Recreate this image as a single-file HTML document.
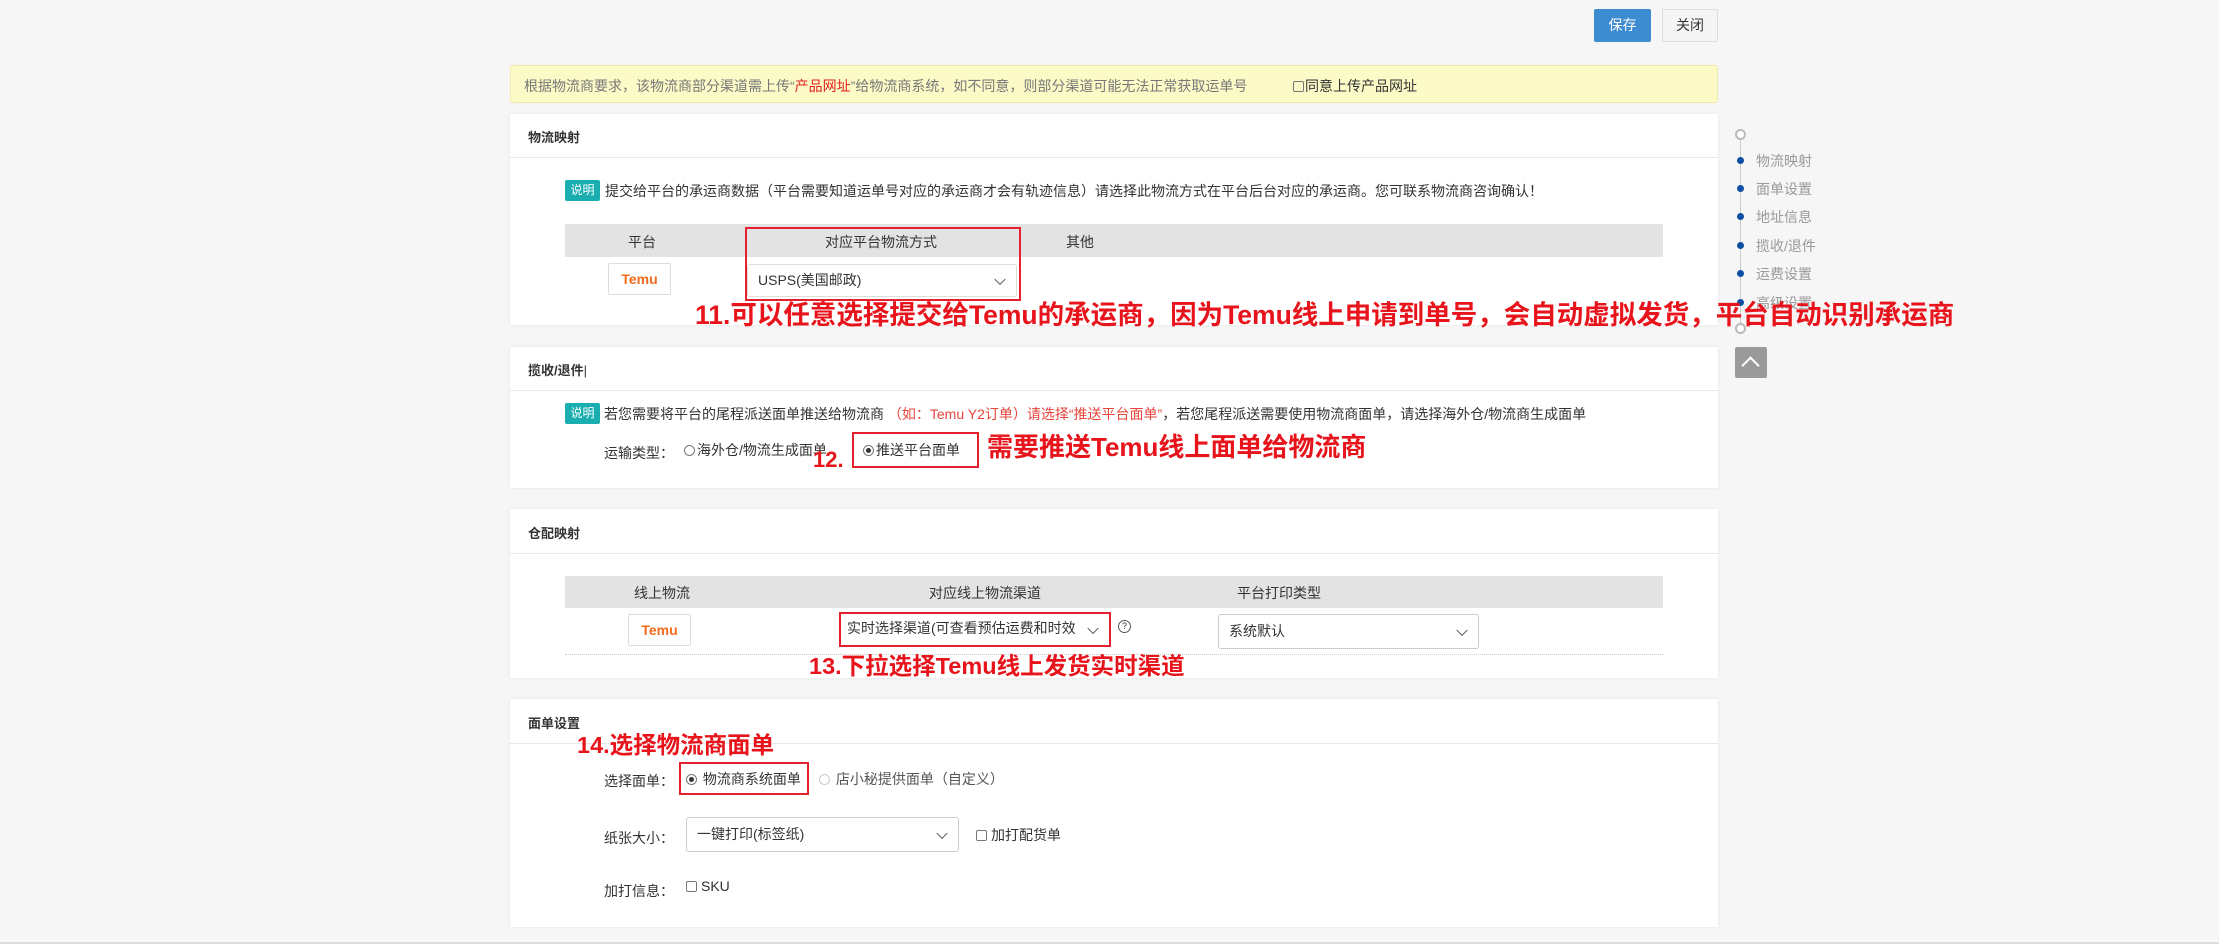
<!DOCTYPE html>
<html><head><meta charset="utf-8"><style>
*{box-sizing:border-box;margin:0;padding:0}
body{width:2219px;height:944px;background:#f6f6f6;font-family:"Liberation Sans","Noto Sans CJK SC",sans-serif;font-size:14px;color:#333;position:relative;overflow:hidden}
.a{position:absolute;white-space:nowrap}
.panel{position:absolute;left:510px;width:1208px;background:#fff;box-shadow:0 0 3px rgba(0,0,0,.08)}
.ph{position:absolute;left:18px;font-weight:bold;font-size:13px;color:#333}
.pl{position:absolute;left:0;width:100%;height:1px;background:#e8e8e8}
.badge{position:absolute;background:#1aaeb0;color:#fff;font-size:12px;border-radius:2px;text-align:center;line-height:21px;width:35px;height:21px}
.th{position:absolute;left:565px;width:1098px;background:#e3e3e3}
.red{position:absolute;border:2px solid #e3202b}
.ann{position:absolute;color:#e8141c;font-weight:bold;white-space:nowrap;font-family:"Liberation Sans","Noto Sans CJK SC",sans-serif}
.sel{position:absolute;border:1px solid #ccc;border-radius:3px;background:#fff;font-size:14px;padding-left:10px;color:#333}
.sel:after{content:"";position:absolute;right:12px;top:50%;width:7px;height:7px;border-right:1.5px solid #555;border-bottom:1.5px solid #555;transform:translateY(-70%) rotate(45deg)}
.logo{position:absolute;border:1px solid #ddd;border-radius:2px;background:#fff;color:#f36a1d;font-weight:bold;font-size:14px;text-align:center}
.radio{display:inline-block;width:11px;height:11px;border:1px solid #777;border-radius:50%;vertical-align:-1px;margin-right:2px;position:relative}
.radio.on:after{content:"";position:absolute;left:2px;top:2px;width:5px;height:5px;border-radius:50%;background:#333}
.cb{display:inline-block;width:11px;height:11px;border:1px solid #777;border-radius:2px;vertical-align:-1px;margin-right:4px}
.nav{position:absolute;left:1756px;color:#999;font-size:14px}
.dot{position:absolute;left:1737px;width:7px;height:7px;border-radius:50%;background:#0d4fa3}
</style></head><body>

<div class="a" style="left:1594px;top:9px;width:57px;height:33px;background:#3d8bd1;color:#fff;text-align:center;line-height:33px;border-radius:2px">保存</div>
<div class="a" style="left:1662px;top:9px;width:56px;height:33px;background:#f5f5f5;border:1px solid #ddd;text-align:center;line-height:31px;border-radius:2px">关闭</div>

<div class="a" style="left:510px;top:65px;width:1208px;height:38px;background:#fcfbc8;border:1px solid #eeeaa8;border-radius:3px"></div>
<div class="a" style="left:524px;top:76px;color:#777">根据物流商要求，该物流商部分渠道需上传“<span style="color:#e0201f">产品网址</span>”给物流商系统，如不同意，则部分渠道可能无法正常获取运单号</div>
<div class="a" style="left:1293px;top:76px;color:#333"><span class="cb" style="margin-right:1px"></span>同意上传产品网址</div>

<!-- panel 1 -->
<div class="panel" style="top:114px;height:211px">
  <div class="ph" style="top:13px">物流映射</div>
  <div class="pl" style="top:43px"></div>
</div>
<div class="badge" style="left:565px;top:180px">说明</div>
<div class="a" style="left:605px;top:181px">提交给平台的承运商数据（平台需要知道运单号对应的承运商才会有轨迹信息）请选择此物流方式在平台后台对应的承运商。您可联系物流商咨询确认！</div>
<div class="th" style="top:224px;height:33px"></div>
<div class="a" style="left:628px;top:232px">平台</div>
<div class="a" style="left:825px;top:232px">对应平台物流方式</div>
<div class="a" style="left:1066px;top:232px">其他</div>
<div class="logo" style="left:608px;top:263px;width:63px;height:32px;line-height:30px">Temu</div>
<div class="sel" style="left:747px;top:264px;width:270px;height:33px;line-height:31px;border-color:#ddd">USPS(美国邮政)</div>
<div class="red" style="left:745px;top:227px;width:276px;height:74px"></div>

<!-- panel 2 -->
<div class="panel" style="top:347px;height:141px">
  <div class="ph" style="top:13px">揽收/退件<span style="font-weight:normal">|</span></div>
  <div class="pl" style="top:43px"></div>
</div>
<div class="badge" style="left:565px;top:403px">说明</div>
<div class="a" style="left:604px;top:404px">若您需要将平台的尾程派送面单推送给物流商 <span style="color:#e8453c">（如：Temu Y2订单）请选择“推送平台面单”</span>，若您尾程派送需要使用物流商面单，请选择海外仓/物流商生成面单</div>
<div class="a" style="left:604px;top:443px">运输类型：</div>
<div class="a" style="left:684px;top:440px"><span class="radio"></span>海外仓/物流生成面单</div>
<div class="a" style="left:863px;top:440px"><span class="radio on"></span>推送平台面单</div>
<div class="red" style="left:852px;top:432px;width:127px;height:36px"></div>
<div class="ann" style="left:813px;top:448px;font-size:22px;line-height:24px">12.</div>
<div class="ann" style="left:987px;top:431px;font-size:26px;line-height:32px">需要推送Temu线上面单给物流商</div>

<!-- panel 3 -->
<div class="panel" style="top:509px;height:169px">
  <div class="ph" style="top:14px">仓配映射</div>
  <div class="pl" style="top:44px"></div>
</div>
<div class="th" style="top:576px;height:32px"></div>
<div class="a" style="left:634px;top:583px">线上物流</div>
<div class="a" style="left:929px;top:583px">对应线上物流渠道</div>
<div class="a" style="left:1237px;top:583px">平台打印类型</div>
<div class="logo" style="left:628px;top:614px;width:63px;height:32px;line-height:30px">Temu</div>
<div class="sel" style="left:841px;top:614px;width:268px;height:31px;line-height:29px;border:none;padding-left:6px">实时选择渠道(可查看预估运费和时效</div>
<div class="red" style="left:839px;top:612px;width:272px;height:35px"></div>
<div class="a" style="left:1118px;top:620px;width:13px;height:13px;border:1px solid #555;border-radius:50%;font-size:9px;line-height:11px;text-align:center">?</div>
<div class="sel" style="left:1218px;top:614px;width:261px;height:35px;line-height:33px">系统默认</div>
<div class="a" style="left:565px;top:654px;width:1098px;border-top:1px dotted #ccc"></div>
<div class="ann" style="left:809px;top:651px;font-size:23.5px;line-height:30px">13.下拉选择Temu线上发货实时渠道</div>

<!-- panel 4 -->
<div class="panel" style="top:699px;height:228px">
  <div class="ph" style="top:14px">面单设置</div>
  <div class="pl" style="top:44px"></div>
</div>
<div class="ann" style="left:577px;top:731px;font-size:23.5px;line-height:28px">14.选择物流商面单</div>
<div class="a" style="left:604px;top:771px">选择面单：</div>
<div class="a" style="left:686px;top:769px"><span class="radio on"></span> 物流商系统面单</div>
<div class="red" style="left:679px;top:762px;width:130px;height:33px"></div>
<div class="a" style="left:819px;top:769px;color:#555"><span class="radio" style="border-color:#ccc"></span> 店小秘提供面单（自定义）</div>
<div class="a" style="left:604px;top:828px">纸张大小：</div>
<div class="sel" style="left:686px;top:817px;width:273px;height:35px;line-height:33px">一键打印(标签纸)</div>
<div class="a" style="left:976px;top:825px"><span class="cb"></span>加打配货单</div>
<div class="a" style="left:604px;top:881px">加打信息：</div>
<div class="a" style="left:686px;top:878px"><span class="cb"></span>SKU</div>
<div class="a" style="left:0;top:942px;width:2219px;height:2px;background:#ddd"></div>

<!-- side nav -->
<div class="a" style="left:1740px;top:134px;width:1px;height:194px;background:#ccc"></div>
<div class="a" style="left:1735px;top:129px;width:11px;height:11px;border:2px solid #bbb;border-radius:50%;background:#fff"></div>
<div class="dot" style="top:157px"></div><div class="nav" style="top:151px">物流映射</div>
<div class="dot" style="top:185px"></div><div class="nav" style="top:179px">面单设置</div>
<div class="dot" style="top:213px"></div><div class="nav" style="top:207px">地址信息</div>
<div class="dot" style="top:242px"></div><div class="nav" style="top:236px">揽收/退件</div>
<div class="dot" style="top:270px"></div><div class="nav" style="top:264px">运费设置</div>
<div class="dot" style="top:299px"></div><div class="nav" style="top:293px">高级设置</div>
<div class="a" style="left:1735px;top:323px;width:11px;height:11px;border:2px solid #bbb;border-radius:50%;background:#fff"></div>
<div class="a" style="left:1735px;top:347px;width:32px;height:31px;background:#9a9a9a;border-radius:2px"></div>
<div class="a" style="left:1744px;top:359px;width:13px;height:13px;border-left:2px solid #fff;border-top:2px solid #fff;transform:rotate(45deg)"></div>

<div class="ann" style="left:695px;top:298px;font-size:26.5px;line-height:34px">11.可以任意选择提交给Temu的承运商，因为Temu线上申请到单号，会自动虚拟发货，平台自动识别承运商</div>
</body></html>
